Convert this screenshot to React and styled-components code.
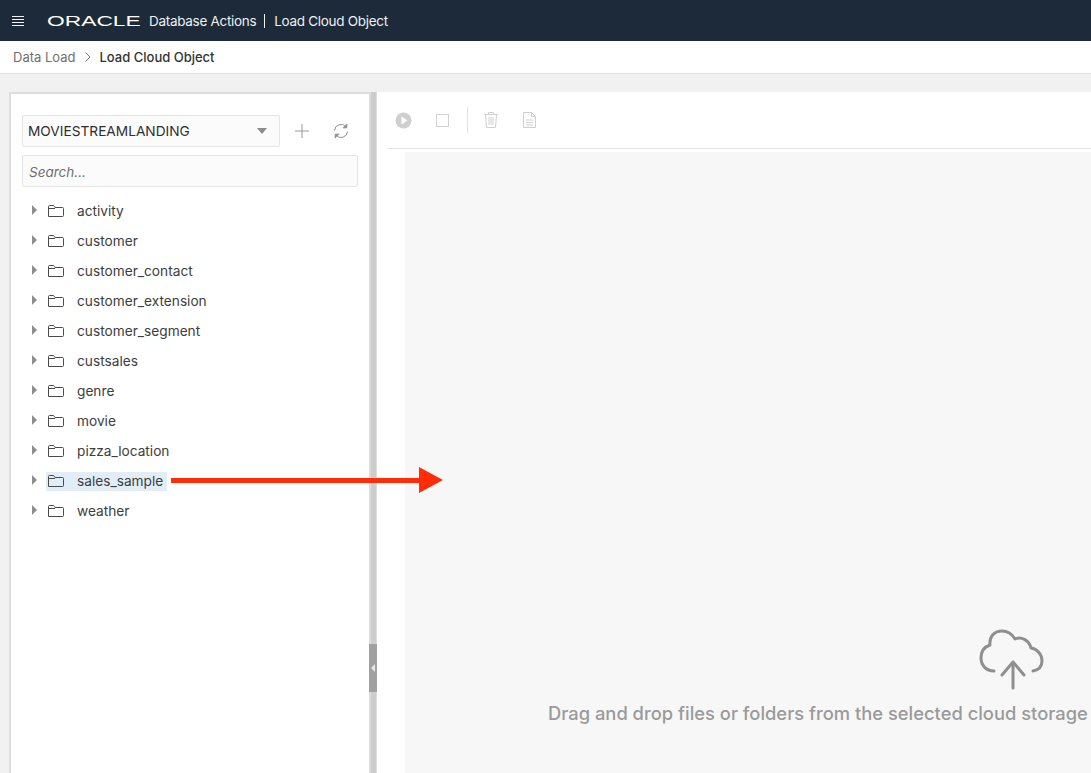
import styled, { createGlobalStyle } from "styled-components"

const GlobalStyle = createGlobalStyle`
html, body {
  margin: 0;
  height: 100%;
  overflow: hidden;
  font-family: Inter, "Liberation Sans", sans-serif;
}
#root { height: 100%; }
* { box-sizing: border-box; }
`

const Page = styled.div`
  position: relative;
  display: flex;
  flex-direction: column;
  height: 100vh;
  background: #f1f1f1;
  overflow: hidden;
`
const Header = styled.header`
  display: flex;
  align-items: center;
  height: 41px;
  flex: none;
  padding-left: 12px;
  background: #1c2a39;
  color: #eef0f2;
  font-size: 13.5px;
`
const Logo = styled.span`
  display: inline-block;
  width: 62px;
  margin: 0 40px 0 23px;
  font-family: "Liberation Sans", sans-serif;
  font-size: 15px;
  line-height: 15px;
  color: #fff;
  white-space: nowrap;
  transform: scaleX(1.52);
  transform-origin: left center;
`
const AppName = styled.span`
  letter-spacing: -0.3px;
  white-space: nowrap;
`
const Divider = styled.span`
  width: 1px;
  height: 14px;
  margin: 0 9px 0 8px;
  background: #eef0f2;
`
const Crumbs = styled.nav`
  display: flex;
  align-items: center;
  gap: 9px;
  flex: none;
  height: 33px;
  padding: 0 13px;
  background: #fff;
  border-bottom: 1px solid #dfe3e6;
  font-size: 13px;
`
const Crumb = styled.span`
  color: ${(p) => (p.$current ? "#333" : "#6f6f6f")};
  font-weight: ${(p) => (p.$current ? 500 : 400)};
`
const Workspace = styled.main`
  display: flex;
  flex: 1;
  min-height: 0;
  padding: 18px 0 0 9px;
`
const LeftPanel = styled.aside`
  width: 360px;
  flex: none;
  padding: 21px 11px 0;
  background: #fff;
  border-top: 2px solid #dddddd;
  border-left: 2px solid #dddddd;
`
const Splitter = styled.div`
  position: relative;
  width: 8px;
  flex: none;
  border-left: 2px solid #dcdcdc;
  border-right: 1px solid #dcdcdc;
  background: #cdcdcd;
`
const SplitterHandle = styled.div`
  position: absolute;
  top: 552px;
  left: -2px;
  width: 8px;
  height: 48px;
  display: flex;
  align-items: center;
  justify-content: center;
  background: #a0a0a0;
`
const HandleArrow = styled.span`
  width: 0;
  height: 0;
  border-top: 4px solid transparent;
  border-bottom: 4px solid transparent;
  border-right: 4px solid #e8e8e8;
`
const BucketRow = styled.div`
  display: flex;
  align-items: center;
`
const BucketSelect = styled.div`
  display: flex;
  align-items: center;
  justify-content: space-between;
  width: 258px;
  height: 32px;
  padding: 0 5px;
  background: #fbfbfb;
  border: 1px solid #e5e5e5;
  border-radius: 2px;
  color: #2f2f2f;
  font-size: 13.7px;
`
const Caret = styled.span`
  width: 0;
  height: 0;
  margin-right: 7px;
  border-left: 5px solid transparent;
  border-right: 5px solid transparent;
  border-top: 6px solid #8c8c8c;
`
const BucketTools = styled.div`
  display: flex;
  align-items: center;
  gap: 24px;
  margin-left: 15px;
`
const Search = styled.input`
  display: block;
  width: 100%;
  height: 32px;
  margin: 8px 0 9px;
  padding: 1px 6px 0;
  background: #fbfbfb;
  border: 1px solid #e5e5e5;
  border-radius: 2px;
  outline: none;
  font-family: inherit;
  font-size: 13.5px;
  font-style: italic;
  &::placeholder { color: #6f6f6f; opacity: 1; }
`
const Tree = styled.ul`
  margin: 0;
  padding: 0;
  list-style: none;
`
const TreeRow = styled.li`
  display: flex;
  align-items: center;
  height: 30px;
  padding-left: 10px;
`
const Toggle = styled.span`
  width: 0;
  height: 0;
  margin-right: 9px;
  margin-top: -2px;
  border-top: 5px solid transparent;
  border-bottom: 5px solid transparent;
  border-left: 5px solid #8d8d8d;
`
const NodeLabel = styled.span`
  display: flex;
  align-items: center;
  gap: 13px;
  height: 19px;
  padding: 0 4px 0 2px;
  background: ${(p) => (p.$selected ? "#e1eef7" : "transparent")};
  color: #3d3d3d;
  font-size: 13.7px;
`
const RightPanel = styled.section`
  display: flex;
  flex-direction: column;
  flex: 1;
  min-width: 0;
  background: #fff;
`
const Toolbar = styled.div`
  display: flex;
  align-items: center;
  flex: none;
  height: 57px;
  margin-left: 10px;
  padding: 0 0 0 7px;
  border-bottom: 1px solid #e4e4e4;
`
const ToolButton = styled.span`
  display: flex;
  width: 18px;
  justify-content: center;
  margin-right: ${(p) => p.$gap}px;
`
const ToolDivider = styled.span`
  width: 1px;
  height: 26px;
  margin-right: 14px;
  background: #e2e2e2;
`
const DropZone = styled.div`
  display: flex;
  flex-direction: column;
  flex: 1;
  margin: 3px 0 0 28px;
  padding: 477px 0 0 143px;
  background: #f7f7f7;
  white-space: nowrap;
`
const DropIcon = styled.span`
  display: block;
  margin: 0 0 8px 431px;
`
const DropText = styled.span`
  color: #9a9a9a;
  font-size: 18.35px;
  font-weight: 500;
`
const ArrowOverlay = styled.svg`
  position: absolute;
  left: 171px;
  top: 467px;
`

const buckets = ["activity", "customer", "customer_contact", "customer_extension", "customer_segment", "custsales", "genre", "movie", "pizza_location", "sales_sample", "weather"]

const Folder = () => (
  <svg width="16" height="12" viewBox="0 0 16 12" fill="none" stroke="#4a4a4a" strokeWidth="1">
    <path d="M0.5 11.5V1.5a1 1 0 0 1 1-1h4l1.5 2h7.5a1 1 0 0 1 1 1v7a1 1 0 0 1-1 1z" />
    <path d="M0.5 3.5h6.5" />
  </svg>
)

const Plus = () => (
  <svg width="14" height="14" viewBox="0 0 14 14" stroke="#9a9a9a" strokeWidth="1">
    <path d="M7 0v14M0 7h14" />
  </svg>
)

const Refresh = () => (
  <svg width="16" height="16" viewBox="0 0 16 16" fill="none" stroke="#8f8f8f" strokeWidth="1">
    <path d="M1.5 7.5A6.5 6.5 0 0 1 13 3.8" />
    <path d="M14.5 8.5A6.5 6.5 0 0 1 3 12.2" />
    <path d="M13.8 0.8v4h-4" fill="#8f8f8f" />
    <path d="M2.2 15.2v-4h4" fill="#8f8f8f" />
  </svg>
)

const Play = () => (
  <svg width="17" height="17" viewBox="0 0 17 17">
    <circle cx="8.5" cy="8.5" r="8" fill="#cfcfcf" />
    <path d="M6.5 4.5l6 4-6 4z" fill="#fff" />
  </svg>
)

const Stop = () => (
  <svg width="13" height="13" viewBox="0 0 13 13" fill="none" stroke="#d2d2d2">
    <rect x="0.5" y="0.5" width="12" height="12" />
  </svg>
)

const Trash = () => (
  <svg width="14" height="16" viewBox="0 0 14 16" fill="none" stroke="#d0d0d0">
    <path d="M0 2.5h14M4.5 2.5V0.5h5v2M1.5 2.5l1 13h9l1-13M5 5v8M7 5v8M9 5v8" />
  </svg>
)

const Doc = () => (
  <svg width="13" height="16" viewBox="0 0 13 16" fill="none" stroke="#d0d0d0">
    <path d="M0.5 0.5h8l4 4v11h-12zM8.5 0.5v4h4M3 8h7M3 10.5h7M3 13h7" />
  </svg>
)

const Cloud = () => (
  <svg width="65" height="61" viewBox="0 0 65 61" fill="none" stroke="#8f8f8f" strokeWidth="3" strokeLinecap="round" strokeLinejoin="round">
    <path d="M15 42C7 42 2 36 2 29C2 23 5 18 11 16C10 8 15 2 23 2C29 2 33 5 36 10C42 7 50 11 52 19C58 20 63 25 63 32C63 38 59 41 54 42" />
    <path d="M23 46L34 33L45 46M34 33V59" />
  </svg>
)

const App = () => {
  return (
    <Page>
      <GlobalStyle />
      <Header>
        <svg width="12" height="10" viewBox="0 0 12 10" stroke="#eef0f2" strokeWidth="1">
          <path d="M0 0.5h12M0 3.5h12M0 6.5h12M0 9.5h12" />
        </svg>
        <Logo>ORACLE</Logo>
        <AppName>Database Actions</AppName>
        <Divider />
        <AppName>Load Cloud Object</AppName>
      </Header>
      <Crumbs>
        <Crumb>Data Load</Crumb>
        <svg width="6" height="10" viewBox="0 0 6 10" fill="none" stroke="#777" strokeWidth="1">
          <path d="M0.5 0.5L5 5L0.5 9.5" />
        </svg>
        <Crumb $current>Load Cloud Object</Crumb>
      </Crumbs>
      <Workspace>
        <LeftPanel>
          <BucketRow>
            <BucketSelect>
              MOVIESTREAMLANDING
              <Caret />
            </BucketSelect>
            <BucketTools>
              <Plus />
              <Refresh />
            </BucketTools>
          </BucketRow>
          <Search placeholder="Search..." />
          <Tree>
            {buckets.map((name) => (
              <TreeRow key={name}>
                <Toggle />
                <NodeLabel $selected={name === "sales_sample"}>
                  <Folder />
                  {name}
                </NodeLabel>
              </TreeRow>
            ))}
          </Tree>
        </LeftPanel>
        <Splitter>
          <SplitterHandle>
            <HandleArrow />
          </SplitterHandle>
        </Splitter>
        <RightPanel>
          <Toolbar>
            <ToolButton $gap={21}><Play /></ToolButton>
            <ToolButton $gap={16}><Stop /></ToolButton>
            <ToolDivider />
            <ToolButton $gap={20}><Trash /></ToolButton>
            <ToolButton $gap={0}><Doc /></ToolButton>
          </Toolbar>
          <DropZone>
            <DropIcon><Cloud /></DropIcon>
            <DropText>Drag and drop files or folders from the selected cloud storage</DropText>
          </DropZone>
        </RightPanel>
      </Workspace>
      <ArrowOverlay width="273" height="26" viewBox="0 0 273 26">
        <path d="M0 11L248 11V0L272 13L248 26V16L0 16z" fill="#ff2d0a" />
      </ArrowOverlay>
    </Page>
  )
}

export default App
